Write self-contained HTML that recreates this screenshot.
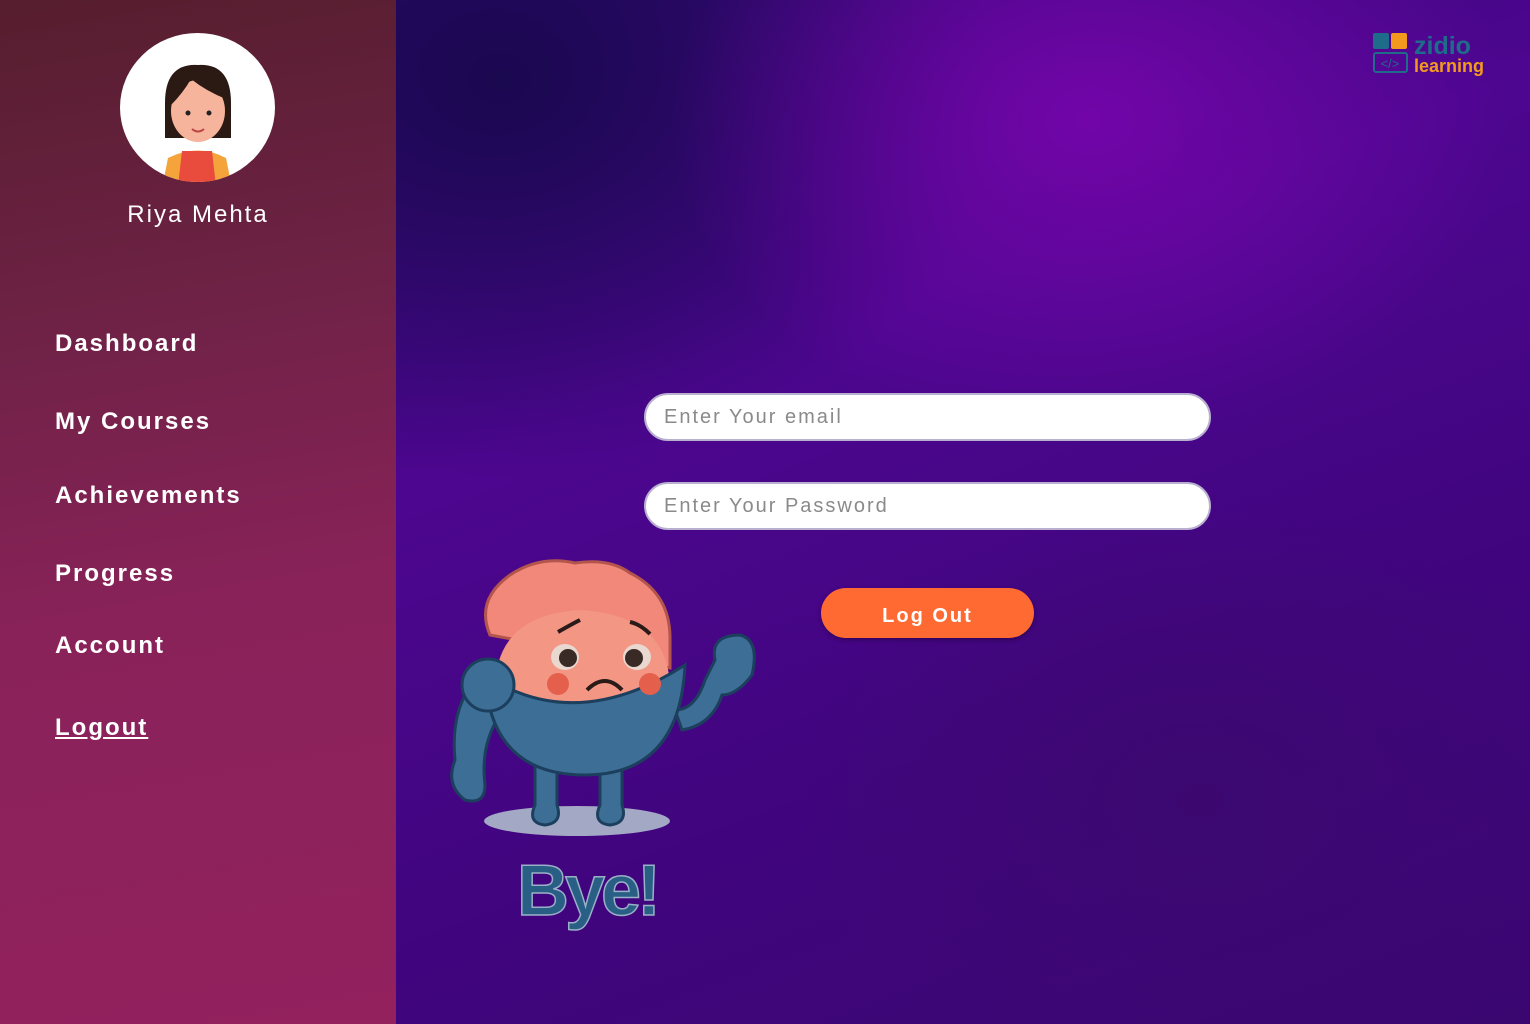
<!DOCTYPE html>
<html><head><meta charset="utf-8"><style>
*{margin:0;padding:0;box-sizing:border-box}
body{width:1530px;height:1024px;overflow:hidden;position:relative;font-family:"Liberation Sans",sans-serif;
background:radial-gradient(ellipse 420px 320px at 1090px 120px,#7205a8 0%,rgba(114,5,168,0) 100%),
radial-gradient(ellipse 500px 400px at 500px 80px,#1a0850 0%,rgba(26,8,80,0) 100%),
radial-gradient(ellipse 400px 300px at 1200px 800px,#3c0870 0%,rgba(60,8,112,0) 100%),
linear-gradient(160deg,#2a0a6a 0%,#4d0690 40%,#40057e 70%,#3a0670 100%);}
.side{position:absolute;left:0;top:0;width:396px;height:1024px;background:linear-gradient(170deg,#561e2e 0%,#6e2245 30%,#8a225a 60%,#92215e 100%)}
.av{position:absolute;left:120px;top:33px;width:155px;height:149px;border-radius:50%;background:#fff;overflow:hidden}
.name{position:absolute;left:0;width:396px;text-align:center;top:201px;color:#fff;font-size:24px;letter-spacing:2px}
.nav{position:absolute;left:55px;color:#fff;font-size:24px;letter-spacing:2px;font-weight:bold}
.inp{position:absolute;left:644px;width:567px;height:48px;border-radius:24px;background:#fff;border:2px solid #b9b0d0;padding-left:18px;line-height:44px;color:#8a8a8a;font-size:20px;letter-spacing:2px}
.btn{position:absolute;left:821px;top:588px;width:213px;height:50px;border-radius:25px;background:#ff6a33;color:#fff;font-size:20px;font-weight:bold;letter-spacing:2px;text-align:center;line-height:56px;box-shadow:0 2px 4px rgba(0,0,0,.3)}
</style></head><body>
<div class="side">
<div class="av"><svg width="155" height="149" viewBox="0 0 155 149">
<path d="M48 125 q30 -15 58 0 l6 30 h-70z" fill="#f4a43a"/>
<path d="M62 118 h30 l4 35 h-38z" fill="#e94b3c"/>
<path d="M45 70 q0 -40 33 -38 q33 -2 33 38 l0 35 l-66 0z" fill="#2b1a14"/>
<ellipse cx="78" cy="78" rx="27" ry="31" fill="#f6b49c"/>
<path d="M51 72 q5 -30 30 -28 q20 2 25 22 q-20 -8 -35 -20 q-8 14 -20 26z" fill="#2b1a14"/>
<circle cx="68" cy="80" r="2.5" fill="#222"/><circle cx="89" cy="80" r="2.5" fill="#222"/>
<path d="M72 96 q6 5 12 0" stroke="#b44" stroke-width="2" fill="none"/>
</svg></div>
<div class="name">Riya Mehta</div>
<div class="nav" style="top:330px">Dashboard</div>
<div class="nav" style="top:408px">My Courses</div>
<div class="nav" style="top:482px">Achievements</div>
<div class="nav" style="top:560px">Progress</div>
<div class="nav" style="top:632px">Account</div>
<div class="nav" style="top:714px;text-decoration:underline">Logout</div>
</div>
<svg style="position:absolute;left:1372px;top:32px" width="115" height="44" viewBox="0 0 115 44">
<rect x="1" y="1" width="16" height="16" rx="2" fill="#1e6b8a"/><rect x="19" y="1" width="16" height="16" rx="2" fill="#f39a1e"/>
<rect x="2" y="21" width="33" height="19" rx="2" fill="none" stroke="#1e6b8a" stroke-width="2"/>
<text x="18" y="36" font-size="13" fill="#1e6b8a" text-anchor="middle" font-family="Liberation Sans">&lt;/&gt;</text>
<text x="42" y="22" font-size="25" font-weight="bold" fill="#1e6b8a" font-family="Liberation Sans">zidio</text>
<text x="42" y="40" font-size="18" font-weight="bold" fill="#f39a1e" font-family="Liberation Sans">learning</text>
</svg>
<div class="inp" style="top:393px">Enter Your email</div>
<div class="inp" style="top:482px">Enter Your Password</div>
<div class="btn">Log Out</div>
<svg style="position:absolute;left:440px;top:550px" width="330" height="390" viewBox="0 0 330 390">
<ellipse cx="137" cy="271" rx="93" ry="15" fill="#a3a8c4"/>
<path d="M95 200 v55 q-8 18 10 20 q18 -2 12 -20 v-55z M160 200 v55 q-8 18 10 20 q18 -2 12 -20 v-55z" fill="#3c6e96" stroke="#1d3f5e" stroke-width="3"/>
<path d="M235 160 q20 0 30 -30 l10 -20 q-5 -25 25 -25 q20 5 12 40 q-15 20 -30 20 q-10 30 -40 35z" fill="#3c6e96" stroke="#1d3f5e" stroke-width="3"/>
<path d="M35 130 q-25 30 -20 80 q-10 25 10 40 q20 5 20 -15 q-5 -40 15 -70z" fill="#3c6e96" stroke="#1d3f5e" stroke-width="3"/>
<path d="M50 85 q-15 -35 20 -60 q30 -20 65 -12 q35 -5 55 10 q40 20 40 65 l0 30 z" fill="#f1887a" stroke="#b4554d" stroke-width="3"/>
<path d="M55 140 q0 -75 85 -80 q90 5 90 80 q-10 80 -90 82 q-80 -2 -85 -82z" fill="#f39684"/>
<path d="M45 125 q90 60 200 -10 q-5 110 -100 110 q-95 0 -100 -100z" fill="#3c6e96" stroke="#1d3f5e" stroke-width="3"/>
<circle cx="48" cy="135" r="26" fill="#3c6e96" stroke="#1d3f5e" stroke-width="3"/>
<ellipse cx="125" cy="107" rx="14" ry="13" fill="#e8d8d0"/><circle cx="128" cy="108" r="9" fill="#3a2a26"/>
<ellipse cx="197" cy="107" rx="14" ry="13" fill="#e8d8d0"/><circle cx="194" cy="108" r="9" fill="#3a2a26"/>
<circle cx="118" cy="134" r="11" fill="#e5604c"/><circle cx="210" cy="134" r="11" fill="#e5604c"/>
<path d="M147 140 q18 -18 35 0" stroke="#2a1a18" stroke-width="4" fill="none"/>
<path d="M118 82 q14 -8 22 -12 M190 72 q10 2 20 12" stroke="#2a1a18" stroke-width="4" fill="none"/>
<text x="147" y="365" font-size="72" font-weight="bold" text-anchor="middle" fill="#2a5f85" stroke="#9ab0c8" stroke-width="1.5" letter-spacing="-4" font-family="Liberation Sans">Bye!</text>
</svg>
</body></html>
